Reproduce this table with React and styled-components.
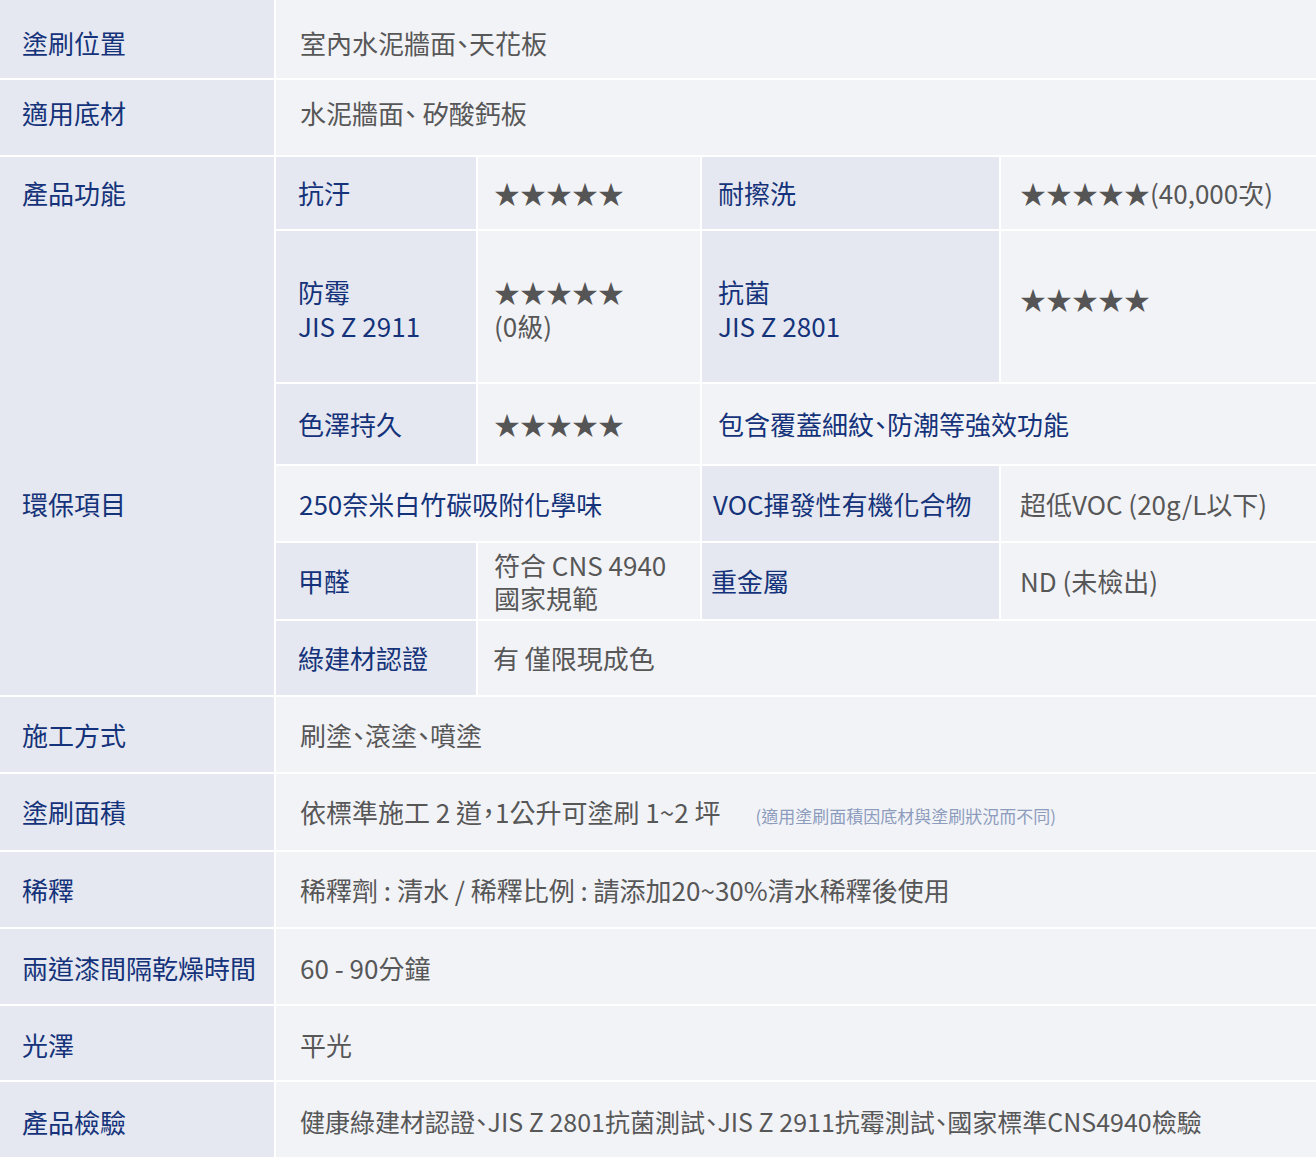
import React from 'react'
import styled, { createGlobalStyle } from 'styled-components'

const GlobalStyle = createGlobalStyle`
  html, body {
    margin: 0;
    padding: 0;
    background: #ffffff;
  }
  body {
    font-family: 'Noto Sans CJK TC', 'Noto Sans', sans-serif;
    font-feature-settings: 'halt';
  }
`

const Sheet = styled.div`
  display: grid;
  grid-template-columns: 274px 200px 222px 297px 1fr;
  grid-template-rows: 78px 75px 72px 151px 80px 75px 76px 74px 75px 76px 75px 75px 74px 75px;
  gap: 2px;
  width: 1316px;
  background: #ffffff;
  font-size: 26px;
  line-height: 1.27;
`

// positive shift pushes the text down, negative lifts it
const shiftPad = p => `
  padding-top: ${Math.max(0, (p.$shift || 0) * 2)}px;
  padding-bottom: ${Math.max(0, -(p.$shift || 0) * 2)}px;
`

const Head = styled.div`
  grid-column: 1;
  display: flex;
  align-items: center;
  padding-left: 22px;
  background: #e5e8f0;
  color: #15337a;
  ${shiftPad}
`

const SectionHead = styled.div`
  grid-column: 1;
  grid-row: 3 / span 6;
  display: grid;
  grid-template-rows: subgrid;
  background: #e5e8f0;
  color: #15337a;
`

const SectionTitle = styled.div`
  grid-row: ${p => p.$row};
  display: flex;
  align-items: center;
  padding-left: 22px;
`

const Label = styled.div`
  grid-column: ${p => p.$col} / span ${p => p.$span || 1};
  display: flex;
  flex-direction: column;
  justify-content: center;
  padding-left: ${p => p.$pad ?? 16}px;
  background: #e5e8f0;
  color: #15337a;
  ${shiftPad}
`

const Value = styled.div`
  grid-column: ${p => p.$col} / span ${p => p.$span || 1};
  display: flex;
  flex-direction: column;
  justify-content: ${p => (p.$top ? 'flex-start' : 'center')};
  padding-left: ${p => p.$pad ?? 16}px;
  background: #f2f3f7;
  color: ${p => (p.$accent ? '#15337a' : '#575757')};
  font-size: ${p => p.$size || 26}px;
  ${shiftPad}
  ${p => p.$top && `padding-top: ${p.$top}px;`}
`

const Line = styled.div`
  display: flex;
  align-items: ${p => (p.$baseline ? 'baseline' : 'center')};
`

const Stars = styled.span`
  color: #555555;
`

const Note = styled.span`
  margin-left: 35px;
  font-size: 17px;
  color: #8d9cbd;
`

const stars = '★★★★★'

const specs = [
  ['施工方式', '刷塗、滾塗、噴塗', 0, 26],
  ['塗刷面積', null, 0, 26],
  ['稀釋', '稀釋劑 : 清水 / 稀釋比例 : 請添加20~30%清水稀釋後使用', 0, 26],
  ['兩道漆間隔乾燥時間', '60 - 90分鐘', 1, 26],
  ['光澤', '平光', 2, 26],
  ['產品檢驗', '健康綠建材認證、JIS Z 2801抗菌測試、JIS Z 2911抗霉測試、國家標準CNS4940檢驗', 2, 25],
]

function App() {
  return (
    <>
      <GlobalStyle />
      <Sheet>
        <Head $shift={4}>塗刷位置</Head>
        <Value $col={2} $span={4} $pad={24} $shift={4}>室內水泥牆面、天花板</Value>

        <Head $shift={-5}>適用底材</Head>
        <Value $col={2} $span={4} $pad={24} $shift={-5}>水泥牆面、 矽酸鈣板</Value>

        <SectionHead>
          <SectionTitle $row={1}>產品功能</SectionTitle>
          <SectionTitle $row={4}>環保項目</SectionTitle>
        </SectionHead>

        {/* 產品功能 */}
        <Label $col={2} $pad={22}>抗汙</Label>
        <Value $col={3}><Stars>{stars}</Stars></Value>
        <Label $col={4}>耐擦洗</Label>
        <Value $col={5} $pad={19}><Line><Stars>{stars}</Stars>(40,000次)</Line></Value>

        <Label $col={2} $pad={22} $shift={2}>
          <Line>防霉</Line>
          <Line>JIS Z 2911</Line>
        </Label>
        <Value $col={3} $shift={2}>
          <Line><Stars>{stars}</Stars></Line>
          <Line>(0級)</Line>
        </Value>
        <Label $col={4} $shift={2}>
          <Line>抗菌</Line>
          <Line>JIS Z 2801</Line>
        </Label>
        <Value $col={5} $pad={19} $top={51}><Stars>{stars}</Stars></Value>

        <Label $col={2} $pad={22}>色澤持久</Label>
        <Value $col={3}><Stars>{stars}</Stars></Value>
        <Value $col={4} $span={2} $accent>包含覆蓋細紋、防潮等強效功能</Value>

        {/* 環保項目 */}
        <Value $col={2} $span={2} $pad={23} $accent>250奈米白竹碳吸附化學味</Value>
        <Label $col={4} $pad={11}>VOC揮發性有機化合物</Label>
        <Value $col={5} $pad={19}>超低VOC (20g/L以下)</Value>

        <Label $col={2} $pad={22}>甲醛</Label>
        <Value $col={3}>
          <Line>符合 CNS 4940</Line>
          <Line>國家規範</Line>
        </Value>
        <Label $col={4} $pad={9}>重金屬</Label>
        <Value $col={5} $pad={19}>ND (未檢出)</Value>

        <Label $col={2} $pad={22}>綠建材認證</Label>
        <Value $col={3} $span={3} $pad={15}>有 僅限現成色</Value>

        {specs.map(([head, text, shift, size]) => (
          <React.Fragment key={head}>
            <Head $shift={shift}>{head}</Head>
            <Value $col={2} $span={4} $pad={24} $shift={shift} $size={size}>
              {text ?? (
                <Line $baseline>
                  依標準施工 2 道，1公升可塗刷 1~2 坪
                  <Note>(適用塗刷面積因底材與塗刷狀況而不同)</Note>
                </Line>
              )}
            </Value>
          </React.Fragment>
        ))}
      </Sheet>
    </>
  )
}

export default App
